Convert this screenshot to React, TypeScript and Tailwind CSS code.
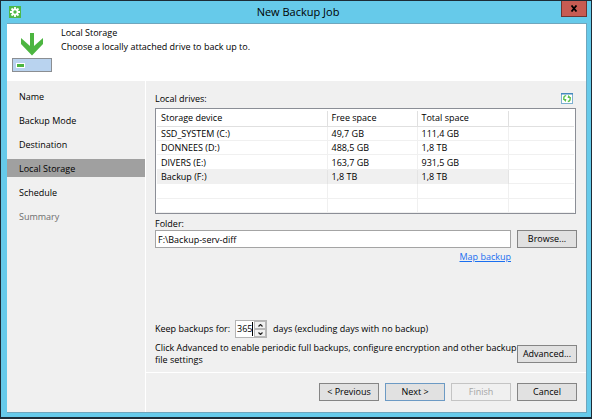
import { useState } from "react";

const steps = ["Name", "Backup Mode", "Destination", "Local Storage", "Schedule", "Summary"];

const drives = [
  ["SSD_SYSTEM (C:)", "49,7 GB", "111,4 GB"],
  ["DONNEES (D:)", "488,5 GB", "1,8 TB"],
  ["DIVERS (E:)", "163,7 GB", "931,5 GB"],
  ["Backup (F:)", "1,8 TB", "1,8 TB"],
  ["", "", ""],
  ["", "", ""],
];

const buttonBase = "h-[18px] w-[60px] shrink-0 border text-center leading-4";
const buttonNormal = `${buttonBase} border-[#858585] bg-[#e1e1e1]`;

function GearIcon() {
  return (
    <svg className="size-3 shrink-0" viewBox="0 0 12 12" aria-hidden="true">
      <rect width="12" height="12" fill="#4db848" />
      <g stroke="#fff" strokeWidth="1.8">
        <path d="M6 1v10M1 6h10M2.5 2.5l7 7M9.5 2.5l-7 7" />
      </g>
      <circle cx="6" cy="6" r="3.4" fill="#fff" />
      <circle cx="6" cy="6" r="1.7" fill="#4db848" />
    </svg>
  );
}

function StorageIcon() {
  return (
    <svg className="h-10 w-10 shrink-0" viewBox="0 0 40 40" aria-hidden="true">
      <path d="M18 1h4v13l9-8v6L20 23.5 9 12V6l9 8z" fill="#4cb540" />
      <rect x=".5" y="26.5" width="39" height="13" fill="#b9d3ef" stroke="#8b8e92" />
      <rect x="4" y="31" width="9" height="5" fill="#fff" />
      <rect x="5" y="32" width="7" height="3" fill="#4cb540" />
    </svg>
  );
}

function RefreshIcon() {
  return (
    <svg className="h-[11px] w-3" viewBox="0 0 12 11" aria-hidden="true">
      <rect x=".5" y=".5" width="11" height="10" fill="#fff" stroke="#7db0d0" />
      <path d="M0 .5h12" stroke="#4489bd" strokeWidth="2" />
      <path
        d="M5.2 2.6C3 2.8 2.4 4.5 3 6.8M6.8 8.5c2.2-.2 2.8-2 2.2-4.2"
        fill="none"
        stroke="#5cc04c"
        strokeWidth="1.4"
      />
      <path d="M1.8 6h3.6l-.6 3zM10.2 5H6.6l.6-3z" fill="#5cc04c" />
    </svg>
  );
}

function Chevron({ up }: { up?: boolean }) {
  return (
    <svg className="h-[3px] w-[5px]" viewBox="0 0 5 3" aria-hidden="true">
      <path d={up ? "M.5 2.5l2-2 2 2" : "M.5 .5l2 2 2-2"} fill="none" stroke="#222" strokeWidth="1.2" />
    </svg>
  );
}

export default function App() {
  const [folder, setFolder] = useState("F:\\Backup-serv-diff");
  const [days, setDays] = useState(365);

  return (
    <div className="flex min-h-screen flex-col border border-b-2 border-[#1c2b36] bg-[#66caea] font-['Open_Sans','Noto_Sans',sans-serif] text-[9px] leading-3 text-black">
      <header className="grid h-[22px] shrink-0 grid-cols-[1fr_auto_1fr] items-center pr-1 pl-2">
        <GearIcon />
        <h1 className="text-[11px] leading-5">New Backup Job</h1>
        <button
          aria-label="Close"
          className="flex h-4 w-[26px] justify-center self-start justify-self-end border border-t-0 border-[#6d3431] bg-[#c75b52]"
        >
          <svg className="mt-1 h-[7px] w-2" viewBox="0 0 8 7" aria-hidden="true">
            <path d="M1.5 .5l5 6M6.5 .5l-5 6" stroke="#000" strokeWidth="1.8" />
          </svg>
        </button>
      </header>

      <div className="mr-1 mb-1 ml-[6px] flex flex-1 flex-col border-t border-r border-b border-[#6fa6bd] bg-[#f0f0f0]">
        <section className="flex h-[57px] shrink-0 gap-[9px] bg-white pl-[5px]">
          <div className="pt-2">
            <StorageIcon />
          </div>
          <div className="pt-[2px]">
            <h2 className="leading-[14px]">Local Storage</h2>
            <p className="leading-[14px]">Choose a locally attached drive to back up to.</p>
          </div>
        </section>

        <div className="flex flex-1">
          <nav className="flex w-[139px] shrink-0 flex-col gap-[6px] border-r border-white pt-[6px]">
            {steps.map((step) => (
              <a
                key={step}
                href="#"
                aria-current={step === "Local Storage" ? "step" : undefined}
                className={
                  step === "Local Storage"
                    ? "bg-[#a0a0a0] pt-[2px] pl-3 leading-4"
                    : step === "Summary"
                      ? "pt-[2px] pl-3 leading-4 text-[#6d6d6d]"
                      : "pt-[2px] pl-3 leading-4"
                }
              >
                {step}
              </a>
            ))}
          </nav>

          <main className="flex min-w-0 flex-1 flex-col">
            <div className="flex flex-1 flex-col pt-3 pr-[9px] pl-[9px]">
              <div className="flex h-[15px] items-start justify-between pr-1">
                <span id="drives-label">Local drives:</span>
                <button aria-label="Refresh">
                  <RefreshIcon />
                </button>
              </div>

              <div className="mr-px border border-[#8b8e96] bg-white px-px pt-[2px]">
                <table
                  aria-labelledby="drives-label"
                  className="h-[102px] w-full table-fixed border-collapse text-left"
                >
                  <colgroup>
                    <col className="w-[170px]" />
                    <col className="w-[90px]" />
                    <col className="w-[91px]" />
                    <col />
                  </colgroup>
                  <thead>
                    <tr className="h-[15px]">
                      {["Storage device", "Free space", "Total space"].map((title) => (
                        <th key={title} className="border-r border-b border-[#e0e0e0] px-1 py-0 font-normal">
                          {title}
                        </th>
                      ))}
                      <td className="border-b border-[#e0e0e0] p-0" />
                    </tr>
                  </thead>
                  <tbody>
                    {drives.map((row, i) => (
                      <tr key={i} className="border-b border-[#f0f0f0]">
                        {row.map((cell, j) => (
                          <td
                            key={j}
                            className={
                              i === 3
                                ? "border-r border-[#e4e4e4] bg-[#f0f0f0] px-1 pt-px pb-0"
                                : "border-r border-[#f0f0f0] px-1 pt-px pb-0"
                            }
                          >
                            {cell || "\u00a0"}
                          </td>
                        ))}
                        <td className="p-0" />
                      </tr>
                    ))}
                  </tbody>
                </table>
              </div>

              <label htmlFor="folder" className="mt-1">
                Folder:
              </label>
              <div className="flex gap-[6px]">
                <input
                  id="folder"
                  value={folder}
                  onChange={(e) => setFolder(e.target.value)}
                  className="h-[18px] min-w-0 flex-1 border border-[#a4a4a4] bg-white px-[2px] leading-4 outline-none"
                />
                <button className={buttonNormal}>Browse...</button>
              </div>
              <div className="mt-[3px] flex justify-end pr-[66px]">
                <a href="#" className="text-[#1a6ff0] underline">
                  Map backup
                </a>
              </div>

              <div className="mt-auto flex items-center">
                <label htmlFor="days" className="w-20 whitespace-nowrap">
                  Keep backups for:
                </label>
                <div className="mr-[6px] flex h-[18px] w-8 border border-[#b4b4b4] bg-white">
                  <input
                    id="days"
                    inputMode="numeric"
                    value={days}
                    onChange={(e) => setDays(Number(e.target.value) || 0)}
                    className="my-px w-[17px] border-r border-black pl-px outline-none"
                  />
                  <div className="ml-px flex w-3 flex-col bg-[#f0f0f0]">
                    <button
                      aria-label="More days"
                      onClick={() => setDays(days + 1)}
                      className="flex flex-1 items-center justify-center border border-[#b8b8b8]"
                    >
                      <Chevron up />
                    </button>
                    <button
                      aria-label="Fewer days"
                      onClick={() => setDays(days - 1)}
                      className="flex flex-1 items-center justify-center border border-[#b8b8b8]"
                    >
                      <Chevron />
                    </button>
                  </div>
                </div>
                <span>days (excluding days with no backup)</span>
              </div>

              <div className="mt-1 mb-[6px] flex items-center justify-between">
                <p className="whitespace-nowrap">
                  Click Advanced to enable periodic full backups, configure encryption and other backup
                  <br />
                  file settings
                </p>
                <button className={buttonNormal}>Advanced...</button>
              </div>
            </div>

            <footer className="flex h-10 shrink-0 justify-end gap-[6px] border-t border-white pt-[10px] pr-[9px]">
              <button className={buttonNormal}>&lt; Previous</button>
              <button className={`${buttonBase} border-[#6c9ac4] bg-[#e1e1e1]`}>Next &gt;</button>
              <button disabled className={`${buttonBase} border-[#c4c4c4] bg-[#f0f0f0] text-[#a5a5a5]`}>
                Finish
              </button>
              <button className={buttonNormal}>Cancel</button>
            </footer>
          </main>
        </div>
      </div>
    </div>
  );
}
